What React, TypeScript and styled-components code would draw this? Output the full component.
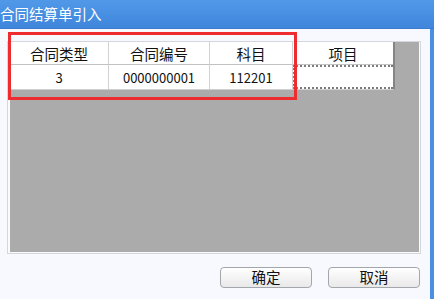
import React from "react";
import styled, { createGlobalStyle } from "styled-components";

const Global = createGlobalStyle`
  html, body { margin: 0; padding: 0; background: #f7f9fe; }
  body { font-family: "Noto Sans CJK SC", "Noto Sans", sans-serif; }
  * { box-sizing: border-box; }
`;

const Window = styled.div`
  width: 434px;
  height: 299px;
  display: flex;
  flex-direction: column;
  overflow: hidden;
  background: #f7f9fe;
`;

const TitleBar = styled.div`
  height: 29px;
  flex: none;
  display: flex;
  align-items: center;
  padding: 0 0 2px 0;
  background: linear-gradient(#5199e8, #3f86dc);
  border-bottom: 1px solid #3a7bd0;
  color: #fff;
  font-size: 14.5px;
`;

const Body = styled.div`
  flex: 1;
  display: flex;
  flex-direction: column;
  padding: 12px 9px 0 7px;
  border-right: 4px solid #4a8fe2;
`;

const Frame = styled.div`
  position: relative;
  height: 213px;
  border: 1px solid #d3d7dd;
  padding: 0 1px 1px 2px;
  background: #fbfbfb;
  display: flex;
`;

const GridArea = styled.div`
  flex: 1;
  background: #ababab;
  display: flex;
  flex-direction: column;
  align-items: flex-start;
`;

const Table = styled.div`
  display: grid;
  grid-template-columns: 99px 101px 83px 100px;
  grid-template-rows: 23px 24px;
  background: #fff;
  border-right: 2px solid #858585;
  border-bottom: 1px solid #cfcfcf;
`;

const Cell = styled.div<{ $head?: boolean; $focus?: boolean }>`
  display: flex;
  align-items: center;
  justify-content: center;
  font-size: ${(p) => (p.$head ? "14.5px" : "13px")};
  color: #111;
  background: #fff;
  border-right: 1px solid #d2d2d2;
  border-bottom: ${(p) => (p.$head ? "1px solid #c2c2c2" : "none")};
  ${(p) => (p.$focus ? `border: 2px dotted #7c7c7c; border-right: none;` : "")}
  &:nth-child(4n) {
    border-right: none;
  }
`;

const Highlight = styled.div`
  position: absolute;
  left: 0px;
  top: -10px;
  width: 289px;
  height: 68px;
  border: 3px solid #ee2b2f;
  pointer-events: none;
`;

const ButtonRow = styled.div`
  display: flex;
  justify-content: flex-end;
  gap: 16px;
  margin-top: 13px;
  padding-right: 1px;
`;

const Button = styled.button`
  width: 92px;
  height: 21px;
  border: 1px solid #a3a6ab;
  border-radius: 4px;
  background: linear-gradient(#ffffff, #e9e9ea);
  font-family: "Noto Sans CJK SC", sans-serif;
  font-size: 14.5px;
  color: #111;
  padding: 0;
  display: flex;
  align-items: center;
  justify-content: center;
  line-height: 1;
`;

export default function App() {
  const heads = ["合同类型", "合同编号", "科目", "项目"];
  const row = ["3", "0000000001", "112201", ""];
  return (
    <Window>
      <Global />
      <TitleBar>合同结算单引入</TitleBar>
      <Body>
        <Frame>
          <GridArea>
            <Table>
              {heads.map((h) => (
                <Cell key={h} $head>
                  {h}
                </Cell>
              ))}
              {row.map((v, i) => (
                <Cell key={i} $focus={i === 3}>
                  {v}
                </Cell>
              ))}
            </Table>
          </GridArea>
          <Highlight />
        </Frame>
        <ButtonRow>
          <Button>确定</Button>
          <Button>取消</Button>
        </ButtonRow>
      </Body>
    </Window>
  );
}
